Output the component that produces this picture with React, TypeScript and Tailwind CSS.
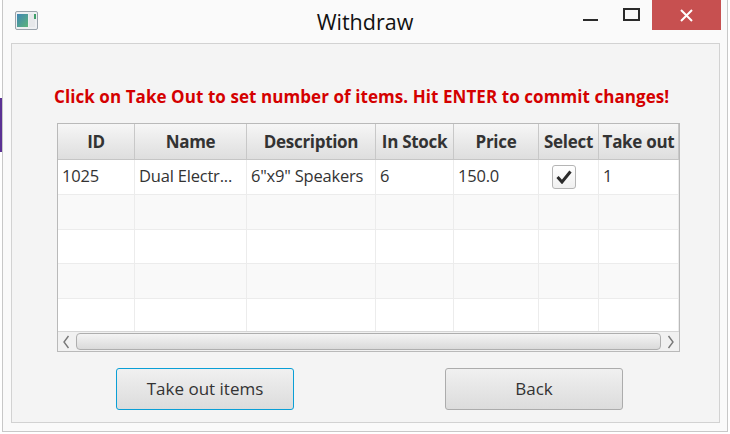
const cols = [
  { name: "ID", w: "w-[77px]" },
  { name: "Name", w: "w-[112px]" },
  { name: "Description", w: "w-[129px]" },
  { name: "In Stock", w: "w-[78px]" },
  { name: "Price", w: "w-[85px]" },
  { name: "Select", w: "w-[60px]" },
  { name: "Take out", w: "flex-1" },
];

const font = { fontFamily: '"Open Sans", "Segoe UI", sans-serif' };

function AppIcon() {
  return (
    <svg width="23" height="19" viewBox="0 0 23 19">
      <defs>
        <linearGradient id="ig" x1="0" y1="0" x2="1" y2="1">
          <stop offset="0" stopColor="#3f86b5" />
          <stop offset="1" stopColor="#5db57a" />
        </linearGradient>
      </defs>
      <rect x="0.5" y="0.5" width="22" height="18" rx="1.5" fill="#eef0f2" stroke="#9aa3ab" />
      <rect x="2" y="3" width="11" height="13" fill="url(#ig)" />
      <rect x="14" y="3" width="6" height="13" fill="#e6e8ea" />
      <rect x="19" y="3" width="2" height="5" fill="#3fa06a" />
    </svg>
  );
}

function Row({ alt, data }: { alt: boolean; data?: string[] }) {
  return (
    <div className={`flex h-[35px] border-b border-[#ececec] ${alt ? "bg-[#f9f9f9]" : "bg-white"}`}>
      {cols.map((c, i) => (
        <div
          key={c.name}
          className={`${c.w} flex items-center border-r border-[#ececec] px-[4px] text-[16.5px] tracking-[-0.2px] text-[#333] whitespace-nowrap overflow-hidden ${i === 5 ? "justify-center pr-[13px]" : ""}`}
        >
          {data && i === 5 ? (
            <div className="flex h-[24px] w-[24px] items-center justify-center rounded-[3px] border border-[#b5b5b5] bg-gradient-to-b from-white to-[#f0f0f0]">
              <svg width="16" height="14" viewBox="0 0 16 14">
                <path d="M1.5 7 L6 12 L14.5 1.5" fill="none" stroke="#2a2a2a" strokeWidth="3" />
              </svg>
            </div>
          ) : (
            data?.[i]
          )}
        </div>
      ))}
    </div>
  );
}

export default function App() {
  return (
    <div className="relative h-[434px] w-[730px] overflow-hidden bg-white" style={font}>
      <div className="absolute left-0 top-[98px] h-[54px] w-[2px] bg-[#5b3294]" />
      <div className="ml-[2px] flex h-[432px] w-[726px] flex-col border-b border-l border-r border-[#c8c8c8] bg-[#fafafa]">
        {/* title bar */}
        <div className="relative flex h-[42px] items-start">
          <div className="ml-[12px] mt-[11px]">
            <AppIcon />
          </div>
          <div className="absolute left-0 right-0 top-[6px] text-center text-[21.5px] text-[#111]">Withdraw</div>
          <div className="ml-auto flex items-start">
            <div className="mr-[25px] mt-[19px] h-[2px] w-[15px] bg-[#2a2a2a]" />
            <div className="mr-[12px] mt-[8px] h-[13px] w-[17px] border-2 border-[#2a2a2a]" />
            <div className="mr-[6px] flex h-[30px] w-[69px] items-center justify-center bg-[#c75050]">
              <svg width="13" height="13" viewBox="0 0 13 13">
                <path d="M1 1 L12 12 M12 1 L1 12" stroke="white" strokeWidth="2" />
              </svg>
            </div>
          </div>
        </div>
        {/* client area */}
        <div className="ml-[8px] mt-[1px] flex h-[380px] w-[709px] flex-col border border-[#d2d2d2] bg-[#f4f4f4]">
          <div className="ml-[42px] mt-[42px] text-[17px] font-bold leading-[22px] tracking-[0.07px] text-[#d40000]">
            Click on Take Out to set number of items. Hit ENTER to commit changes!
          </div>
          <div className="ml-[45px] mt-[15px] flex h-[229px] w-[623px] flex-col border border-[#b9b9b9] bg-white">
            <div className="flex h-[36px] border-b border-[#c5c5c5] bg-gradient-to-b from-[#f6f6f6] to-[#dedede]">
              {cols.map((c) => (
                <div
                  key={c.name}
                  className={`${c.w} flex items-center justify-center border-r border-[#c8c8c8] text-[17px] font-bold tracking-[-0.3px] text-[#333] whitespace-nowrap overflow-hidden`}
                >
                  {c.name}
                </div>
              ))}
            </div>
            <Row alt={false} data={["1025", "Dual Electr...", '6"x9" Speakers', "6", "150.0", "", "1"]} />
            <Row alt={true} />
            <Row alt={false} />
            <Row alt={true} />
            <div className="flex h-[32px] bg-white">
              {cols.map((c) => (
                <div key={c.name} className={`${c.w} border-r border-[#ececec]`} />
              ))}
            </div>
            <div className="flex h-[20px] items-center bg-[#f1f1f1] border-t border-[#d6d6d6]">
              <svg className="ml-[4px]" width="8" height="14" viewBox="0 0 8 14">
                <path d="M6.5 1 L2 7 L6.5 13" fill="none" stroke="#777" strokeWidth="1.4" />
              </svg>
              <div className="mx-[6px] h-[17px] flex-1 rounded-[4px] border border-[#aeaeae] bg-gradient-to-b from-[#f4f4f4] to-[#dadada]" />
              <svg className="mr-[4px]" width="8" height="14" viewBox="0 0 8 14">
                <path d="M1.5 1 L6 7 L1.5 13" fill="none" stroke="#777" strokeWidth="1.4" />
              </svg>
            </div>
          </div>
          <div className="mt-[16px] flex">
            <button className="ml-[104px] h-[42px] w-[178px] rounded-[3px] border-[1.5px] border-[#0a9fd6] bg-gradient-to-b from-[#f0f0f0] to-[#dcdcdc] text-[17px] text-[#333]">
              Take out items
            </button>
            <button className="ml-[151px] h-[42px] w-[178px] rounded-[3px] border border-[#acacac] bg-gradient-to-b from-[#f0f0f0] to-[#dcdcdc] text-[17px] text-[#333]">
              Back
            </button>
          </div>
        </div>
      </div>
    </div>
  );
}
